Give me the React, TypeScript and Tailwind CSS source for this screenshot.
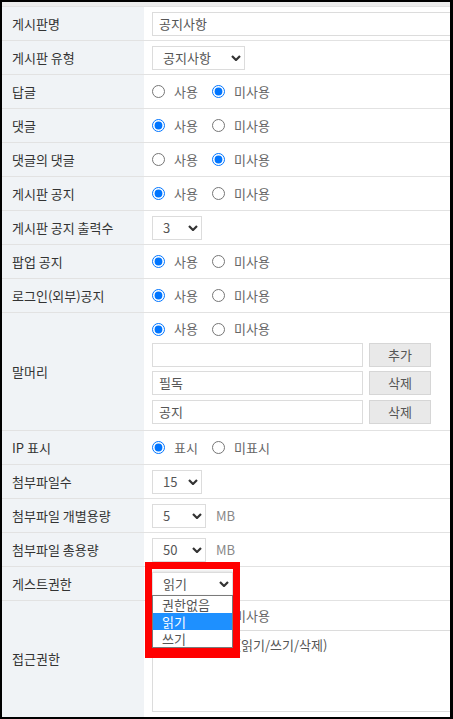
import React from 'react';

const font = "font-['Noto_Sans_CJK_KR','Noto_Sans',sans-serif]";

function Chevron() {
  return (
    <svg width="10" height="6" viewBox="0 0 10 6" className="pointer-events-none absolute right-[4px] top-1/2 -translate-y-1/2">
      <polyline points="1,1 5,5 9,1" fill="none" stroke="#333" strokeWidth="2.2" />
    </svg>
  );
}

function Select({ value, width, className = '' }: { value: string; width: string; className?: string }) {
  return (
    <div className={`relative h-[24px] ${width} ${className}`}>
      <div className="h-full w-full border border-[#dcdcdc] bg-white pl-[10px] flex items-center text-[13px] text-[#555]">
        {value}
      </div>
      <Chevron />
    </div>
  );
}

function Radios({ on, a = '사용', b = '미사용' }: { on: 0 | 1; a?: string; b?: string }) {
  return (
    <div className="flex items-center text-[13px] text-[#666]">
      <input type="radio" checked={on === 0} readOnly className="m-0 h-[13px] w-[13px]" />
      <span className="ml-[9px] w-[38px]">{a}</span>
      <input type="radio" checked={on === 1} readOnly className="m-0 h-[13px] w-[13px]" />
      <span className="ml-[9px]">{b}</span>
    </div>
  );
}

function Row({ label, h = 'h-[34px]', children, align = 'items-center' }: { label: string; h?: string; children: React.ReactNode; align?: string }) {
  return (
    <div className={`flex border-b border-[#e2e2e2] ${h}`}>
      <div className="w-[142px] shrink-0 bg-[#f0f3f6] flex items-center pl-[10px] text-[13px] text-[#333]">{label}</div>
      <div className={`flex-1 flex ${align} pl-[8px] overflow-hidden`}>{children}</div>
    </div>
  );
}

function TextBox({ value = '', width }: { value?: string; width: string }) {
  return (
    <div className={`h-[24px] shrink-0 ${width} border border-[#dcdcdc] bg-white pl-[6px] flex items-center text-[13px] text-[#555]`}>
      {value}
    </div>
  );
}

function Btn({ children }: { children: React.ReactNode }) {
  return (
    <div className="ml-[6px] h-[24px] w-[62px] shrink-0 border border-[#d6d6d6] bg-[#e9e9e9] flex items-center justify-center text-[13px] text-[#555]">
      {children}
    </div>
  );
}

export default function App() {
  return (
    <div className={`relative w-[453px] h-[719px] overflow-hidden bg-white border-2 border-r-[3px] border-black flex flex-col ${font}`}>
      {/* sliver of previous row */}
      <div className="h-[4px] shrink-0 bg-[#ececec]" />
      <div className="h-[1px] shrink-0 bg-[#e2e2e2]" />

      <Row label="게시판명">
        <TextBox value="공지사항" width="w-[330px]" />
      </Row>
      <Row label="게시판 유형">
        <Select value="공지사항" width="w-[93px]" />
      </Row>
      <Row label="답글"><Radios on={1} /></Row>
      <Row label="댓글"><Radios on={0} /></Row>
      <Row label="댓글의 댓글"><Radios on={1} /></Row>
      <Row label="게시판 공지"><Radios on={0} /></Row>
      <Row label="게시판 공지 출력수">
        <Select value="3" width="w-[50px]" />
      </Row>
      <Row label="팝업 공지"><Radios on={0} /></Row>
      <Row label="로그인(외부)공지"><Radios on={0} /></Row>

      <Row label="말머리" h="h-[118px]" align="items-start">
        <div className="flex flex-col pt-[6px]">
          <div className="h-[20px] flex items-center"><Radios on={0} /></div>
          <div className="mt-[4px] flex"><TextBox width="w-[211px]" /><Btn>추가</Btn></div>
          <div className="mt-[4px] flex"><TextBox value="필독" width="w-[211px]" /><Btn>삭제</Btn></div>
          <div className="mt-[5px] flex"><TextBox value="공지" width="w-[211px]" /><Btn>삭제</Btn></div>
        </div>
      </Row>

      <Row label="IP 표시"><Radios on={0} a="표시" b="미표시" /></Row>
      <Row label="첨부파일수">
        <Select value="15" width="w-[50px]" />
      </Row>
      <Row label="첨부파일 개별용량">
        <Select value="5" width="w-[54px]" />
        <span className="ml-[10px] text-[13px] text-[#888]">MB</span>
      </Row>
      <Row label="첨부파일 총용량">
        <Select value="50" width="w-[54px]" />
        <span className="ml-[10px] text-[13px] text-[#888]">MB</span>
      </Row>
      <Row label="게스트권한">
        <Select value="읽기" width="w-[81px]" className="shadow-[0_0_4px_rgba(0,0,0,0.2)]" />
      </Row>

      <div className="flex flex-1">
        <div className="w-[142px] shrink-0 bg-[#f0f3f6] flex items-center pl-[10px] text-[13px] text-[#333]">접근권한</div>
        <div className="flex-1 flex flex-col pl-[8px] pt-[5px] overflow-hidden">
          <div className="h-[20px] flex items-center"><Radios on={0} /></div>
          <div className="mt-[4px] h-[82px] w-[330px] shrink-0 border border-[#dcdcdc] bg-white px-[6px] pt-[4px] text-[13px] text-[#555]">
            회원 기본권한 (읽기/쓰기/삭제)
          </div>
        </div>
      </div>

      {/* open dropdown list */}
      <div className="absolute left-[150px] top-[593px] w-[81px] border border-[#7a7a7a] bg-white shadow-[1px_2px_3px_rgba(0,0,0,0.3)] text-[13px] text-[#555]">
        <div className="h-[17px] pl-[9px] flex items-center">권한없음</div>
        <div className="h-[17px] pl-[9px] flex items-center bg-[#1e90ff] text-white">읽기</div>
        <div className="h-[17px] pl-[9px] flex items-center">쓰기</div>
      </div>

      {/* highlight box */}
      <div className="absolute left-[143px] top-[560px] w-[95px] h-[96px] border-[7px] border-b-[10px] border-[#ff0000]" />
    </div>
  );
}
